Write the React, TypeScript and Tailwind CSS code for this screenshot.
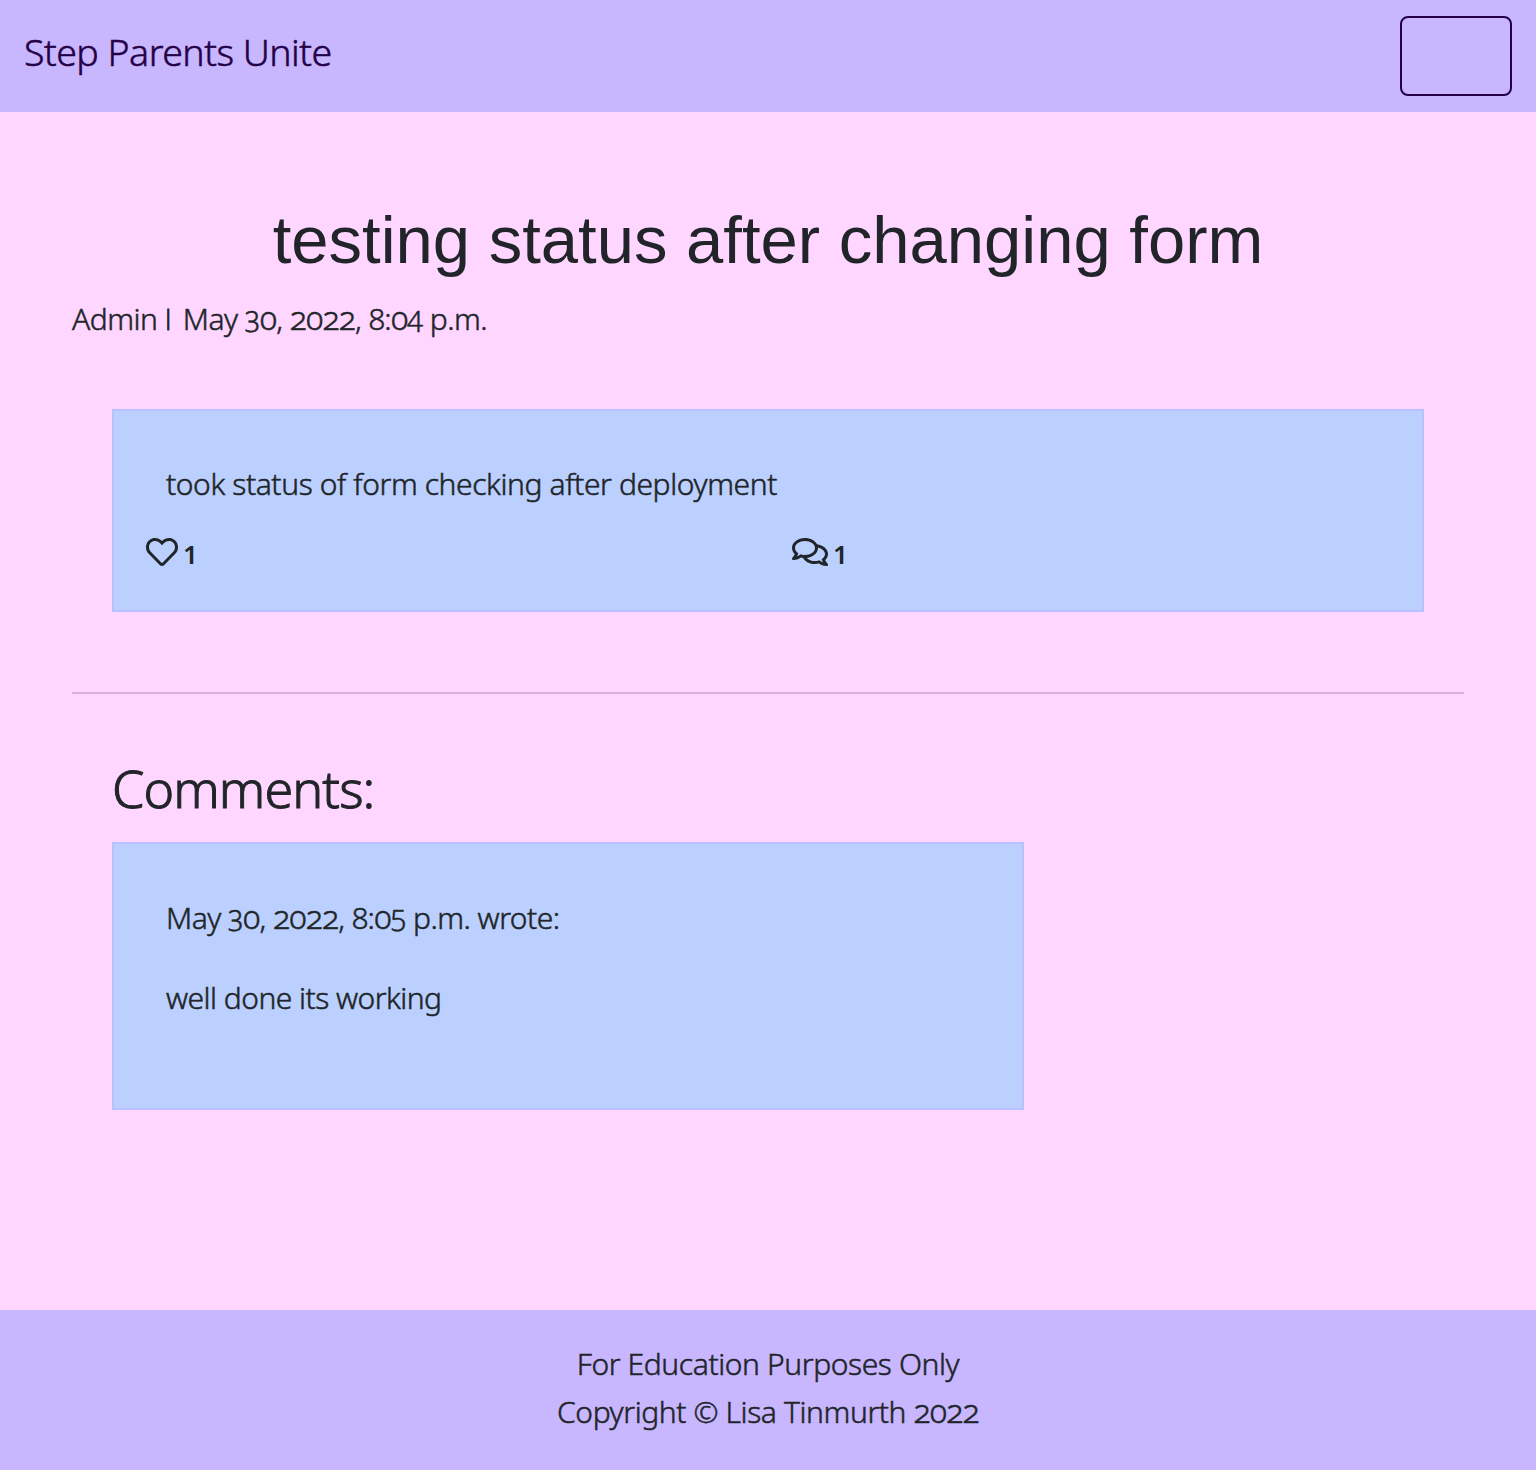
import { FaRegComments, FaRegHeart } from "react-icons/fa";

const bodyText = "text-[30px] leading-[48px] tracking-[-0.4px]";
const dateText = "text-[30px] leading-[48px] tracking-[-0.52px]";

function Numerals({ children }: { children: string }) {
  return (
    <>
      {children.split(/([02]+|[345])/).map((part, i) => {
        if (/^[02]+$/.test(part)) return <span key={i} className="text-[1.07em] leading-none tracking-[-0.9px]">{part}</span>;
        if (/^[345]$/.test(part)) return <span key={i} className="relative -top-[3px] text-[0.96em] leading-none">{part}</span>;
        return part;
      })}
    </>
  );
}

export default function App() {
  return (
    <div className="flex h-[1470px] w-full flex-col bg-[#ffd6ff] font-['Noto_Sans',sans-serif] font-light text-[#212529] [-webkit-text-stroke:0.5px] [font-feature-settings:'onum']">
      <header className="flex h-28 items-center justify-between bg-[#c8b6ff] px-6 text-[#240046]">
        <a className="-mt-2 text-[37.5px] leading-[60px] tracking-[-0.52px]">Step Parents Unite</a>
        <button aria-label="Toggle navigation" className="h-20 w-28 rounded-lg border-2 border-[#240046]" />
      </header>

      <main className="flex flex-1 flex-col px-[72px]">
        <h1 className="mt-[88px] text-center font-['Liberation_Sans',sans-serif] text-[67px] leading-[80px] font-normal [-webkit-text-stroke:0px]">
          testing status after changing form
        </h1>
        <p className={`mt-[15px] ${dateText}`}>
          Admin<span className="relative -top-[5px] mx-[5px] text-[22px] leading-none [-webkit-text-stroke:1px]">|</span>
          <span className="ml-1">
            <Numerals>May 30, 2022, 8:04 p.m.</Numerals>
          </span>
        </p>

        <article className="mx-10 mt-[66px] h-[203px] border-2 border-[#b8c0ff] bg-[#bbd0ff] px-8 pt-[49px]">
          <p className={`pl-5 ${bodyText}`}>took status of form checking after deployment</p>
          <div className="mt-[18px] grid grid-cols-2 gap-x-12 text-[26px] leading-[48px] font-semibold [-webkit-text-stroke:0px] [font-feature-settings:'lnum']">
            <span className="-mr-6 flex items-center gap-[5px]">
              <FaRegHeart className="size-8" />
              <span className="mt-1">1</span>
            </span>
            <span className="flex items-center gap-[5px]">
              <FaRegComments className="h-8 w-9" />
              <span className="mt-1">1</span>
            </span>
          </div>
        </article>

        <hr className="mt-20 border-t-2 border-[#d3b3d5]" />

        <section className="mx-10 mt-[60px]">
          <h2 className="text-[52px] leading-[67px] tracking-[-0.9px] [-webkit-text-stroke:1px]">Comments:</h2>
          <div className="mt-[21px] h-[268px] w-[912px] border-2 border-[#b8c0ff] bg-[#bbd0ff] px-[52px] pt-[50px]">
            <p className={dateText}>
              <Numerals>May 30, 2022, 8:05 p.m. wrote:</Numerals>
            </p>
            <p className="mt-8 text-[30px] leading-[48px] tracking-[-0.53px]">well done its working</p>
          </div>
        </section>
      </main>

      <footer className={`h-40 bg-[#c8b6ff] pt-[30px] text-center ${bodyText}`}>
        <p>For Education Purposes Only</p>
        <p>
          <Numerals>Copyright © Lisa Tinmurth 2022</Numerals>
        </p>
      </footer>
    </div>
  );
}
